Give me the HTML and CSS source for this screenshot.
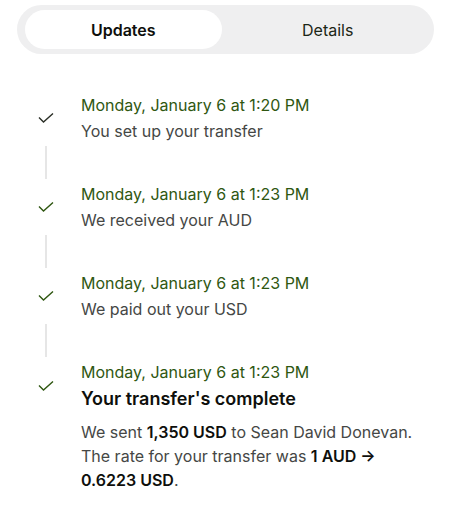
FILE: index.html
```html
<!DOCTYPE html>
<html lang="en">

<head>
  <meta charset="UTF-8">
  <meta name="viewport" content="width=device-width, initial-scale=1.0">
  <title>Transfer updates</title>
  <link rel="stylesheet" href="styles.css">
</head>

<body>
  <div class="page">
    <div class="tabs">
      <div class="tab is-active">Updates</div>
      <div class="tab">Details</div>
    </div>

    <div class="timeline">
      <div class="step">
        <span class="step-icon is-done">
          <svg width="16" height="10" viewBox="0 0 16 10"><path d="M1 4.5 L5.5 9 L15 0.5" fill="none" stroke="currentColor" stroke-width="1.4"/></svg>
        </span>
        <div class="step-body">
          <div class="step-date">Monday, January 6 at 1:20 PM</div>
          <div class="step-text">You set up your transfer</div>
        </div>
      </div>
      <div class="step-line"></div>

      <div class="step">
        <span class="step-icon">
          <svg width="16" height="10" viewBox="0 0 16 10"><path d="M1 4.5 L5.5 9 L15 0.5" fill="none" stroke="currentColor" stroke-width="1.4"/></svg>
        </span>
        <div class="step-body">
          <div class="step-date">Monday, January 6 at 1:23 PM</div>
          <div class="step-text">We received your AUD</div>
        </div>
      </div>
      <div class="step-line"></div>

      <div class="step">
        <span class="step-icon">
          <svg width="16" height="10" viewBox="0 0 16 10"><path d="M1 4.5 L5.5 9 L15 0.5" fill="none" stroke="currentColor" stroke-width="1.4"/></svg>
        </span>
        <div class="step-body">
          <div class="step-date">Monday, January 6 at 1:23 PM</div>
          <div class="step-text">We paid out your USD</div>
        </div>
      </div>
      <div class="step-line"></div>

      <div class="step">
        <span class="step-icon">
          <svg width="16" height="10" viewBox="0 0 16 10"><path d="M1 4.5 L5.5 9 L15 0.5" fill="none" stroke="currentColor" stroke-width="1.4"/></svg>
        </span>
        <div class="step-body">
          <div class="step-date">Monday, January 6 at 1:23 PM</div>
          <div class="step-title">Your transfer's complete</div>
        </div>
        <p class="step-note">We sent <b>1,350 USD</b> to Sean David Donevan. The rate for your transfer was <b>1 AUD &rarr; 0.6223 USD</b>.</p>
      </div>
    </div>
  </div>
</body>

</html>
```

FILE: styles.css
```css
:root {
  --green: #2f5711;
  --ink: #0e0f0c;
  --muted: #454745;
}

* {
  padding: 0;
  margin: 0;
  box-sizing: border-box;
}

body {
  font-family: Inter, "Noto Sans", sans-serif;
  color: var(--ink);
  background: #fff;
}

.page {
  padding: 5px 18px 0 17px;
}

.tabs {
  display: flex;
  gap: 8px;
  padding: 5px 8px;
  background: #efeff0;
  border-radius: 25px;
}

.tab {
  flex: 1;
  height: 39px;
  padding-top: 2px;
  line-height: 37px;
  text-align: center;
  font-size: 16px;
  color: #1c2616;
  border-radius: 20px;
}

.tab.is-active {
  background: #fff;
  font-weight: 600;
  color: var(--ink);
}

.timeline {
  padding: 38px 0 0 21px;
}

.step {
  display: grid;
  grid-template-columns: 16px 1fr;
  column-gap: 27px;
  align-items: center;
}

.step-icon {
  display: flex;
  color: var(--green);
}

.step-icon.is-done {
  color: #2b2f27;
}

.step-date {
  font-size: 16px;
  line-height: 26px;
  color: var(--green);
}

.step-text {
  font-size: 16px;
  line-height: 26px;
  color: var(--muted);
}

.step-title {
  font-size: 18px;
  line-height: 28px;
  font-weight: 600;
}

.step-note {
  grid-column: 2;
  margin-top: 7px;
  font-size: 16px;
  line-height: 24px;
  color: var(--muted);
}

.step-note b {
  font-weight: 600;
  color: var(--ink);
}

.step-line {
  width: 2px;
  height: 33px;
  margin: 2px 0 2px 7px;
  background: #e6e6e6;
}
```
